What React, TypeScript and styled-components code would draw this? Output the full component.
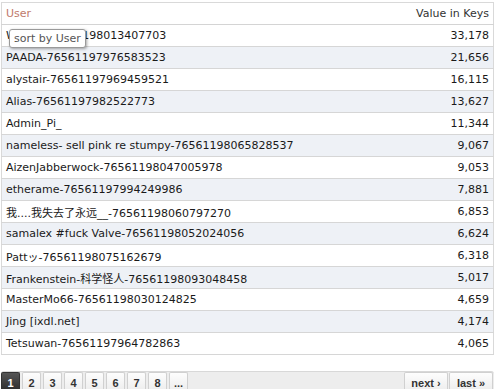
import React from "react"
import styled, { createGlobalStyle } from "styled-components"

const GlobalStyle = createGlobalStyle`
  html, body {
    margin: 0;
    padding: 0;
    background: #fff;
  }
  body {
    font-family: "DejaVu Sans", Verdana, sans-serif;
    font-size: 11px;
    color: #222;
    overflow: hidden;
  }
`

const rows: [string, string][] = [
  ["Walrus-76561198013407703", "33,178"],
  ["PAADA-76561197976583523", "21,656"],
  ["alystair-76561197969459521", "16,115"],
  ["Alias-76561197982522773", "13,627"],
  ["Admin_Pi_", "11,344"],
  ["nameless- sell pink re stumpy-76561198065828537", "9,067"],
  ["AizenJabberwock-76561198047005978", "9,053"],
  ["etherame-76561197994249986", "7,881"],
  ["我....我失去了永远__-76561198060797270", "6,853"],
  ["samalex #fuck Valve-76561198052024056", "6,624"],
  ["Pattッ-76561198075162679", "6,318"],
  ["Frankenstein-科学怪人-76561198093048458", "5,017"],
  ["MasterMo66-76561198030124825", "4,659"],
  ["Jing [ixdl.net]", "4,174"],
  ["Tetsuwan-76561197964782863", "4,065"],
]

const pages = ["1", "2", "3", "4", "5", "6", "7", "8", "..."]

const App: React.FC = () => {
  return (
    <>
      <GlobalStyle />
      <Page>
        <TableWrap>
          <Table>
            <thead>
              <tr>
                <HeadCell $sorted>User</HeadCell>
                <HeadCell $right>Value in Keys</HeadCell>
              </tr>
            </thead>
            <tbody>
              {rows.map(([user, value], i) => (
                <Row key={user} $odd={i % 2 === 1}>
                  <Cell>{user}</Cell>
                  <Cell $right>{value}</Cell>
                </Row>
              ))}
            </tbody>
          </Table>
          <Tooltip>sort by User</Tooltip>
        </TableWrap>

        <Pager>
          {pages.map(p => (
            <PageBtn key={p} $active={p === "1"}>
              {p}
            </PageBtn>
          ))}
          <Spacer />
          <PageBtn $wide>next ›</PageBtn>
          <PageBtn $wide>last »</PageBtn>
        </Pager>
      </Page>
    </>
  )
}

export default App

const Page = styled.div`
  width: 493px;
  padding: 2px 0 0 1px;
  font-family: "DejaVu Sans", Verdana, "Noto Sans CJK SC", sans-serif;
`

const TableWrap = styled.div`
  position: relative;
`

const Table = styled.table`
  width: 100%;
  border-collapse: collapse;
  border: 1px solid #d9d9d9;
  font-size: 11px;
`

const HeadCell = styled.th<{ $sorted?: boolean; $right?: boolean }>`
  height: 21px;
  padding: 0 4px;
  font-weight: normal;
  text-align: ${p => (p.$right ? "right" : "left")};
  color: ${p => (p.$sorted ? "#c07a6c" : "#333")};
  border-bottom: 1px solid #d4d4d4;
  background: #fff;
`

const Row = styled.tr<{ $odd: boolean }>`
  background: ${p => (p.$odd ? "#eef1f6" : "#fff")};
`

const Cell = styled.td<{ $right?: boolean }>`
  height: 21px;
  padding: 0 4px;
  text-align: ${p => (p.$right ? "right" : "left")};
  border-bottom: 1px solid #d6d6d6;
  white-space: nowrap;
  color: #1a1a1a;
`

const Tooltip = styled.div`
  position: absolute;
  left: 8px;
  top: 27px;
  padding: 2px 4px;
  background: #fff;
  border: 1px solid #9a9a9a;
  border-radius: 3px;
  box-shadow: 1px 1px 3px rgba(0, 0, 0, 0.35);
  color: #555;
  font-size: 11px;
  line-height: 13px;
`

const Pager = styled.div`
  display: flex;
  margin-top: 16px;
  height: 20px;
  background: #ededed;
  border-top: 1px solid #d8d8d8;
  border-radius: 3px 3px 0 0;
`

const Spacer = styled.div`
  flex: 1;
`

const PageBtn = styled.div<{ $active?: boolean; $wide?: boolean }>`
  min-width: ${p => (p.$wide ? "42px" : "17px")};
  margin-right: ${p => (p.$wide ? "1px" : "2px")};
  display: flex;
  align-items: center;
  justify-content: center;
  font-family: "Liberation Sans", Arial, sans-serif;
  font-weight: bold;
  font-size: 11px;
  color: ${p => (p.$active ? "#fff" : "#333")};
  background: ${p =>
    p.$active
      ? "linear-gradient(#555, #2a2a2a)"
      : "linear-gradient(#fdfdfd, #ececec)"};
  border: 1px solid ${p => (p.$active ? "#333" : "#d0d0d0")};
  border-bottom: none;
  border-radius: 2px 2px 0 0;
`
